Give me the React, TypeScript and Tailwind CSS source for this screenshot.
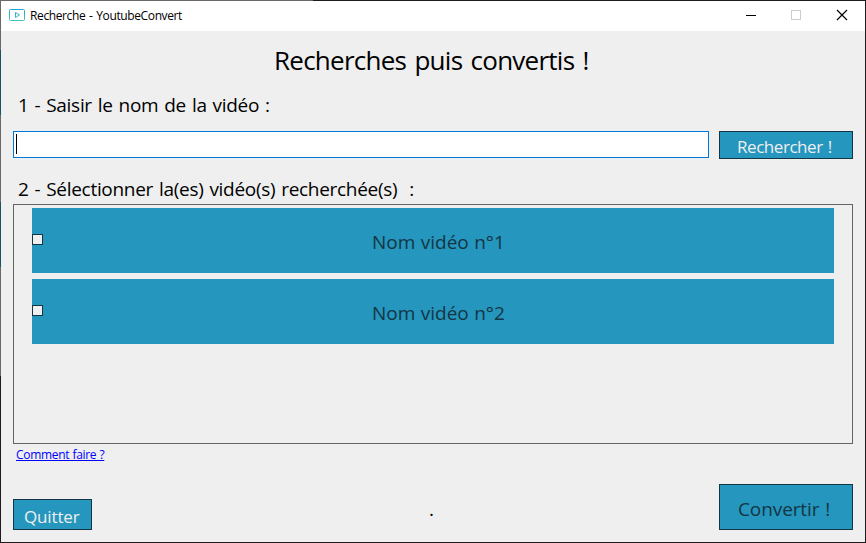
const videos = ["Nom vidéo n°1", "Nom vidéo n°2"];

function WindowEdge() {
  return (
    <div className="flex w-px shrink-0 flex-col">
      <div className="h-[49px] bg-[#6b686a]" />
      <div className="h-[65px] bg-[#204f63]" />
      <div className="h-[87px] bg-[#6b686a]" />
      <div className="h-[65px] bg-[#204f63]" />
      <div className="h-[109px] bg-[#6b686a]" />
      <div className="flex-1 bg-[#1f1b1d]" />
    </div>
  );
}

function TitleBar() {
  return (
    <header className="flex h-[30px] items-start bg-white">
      <svg className="mt-2 ml-2 shrink-0" width="16" height="12" viewBox="0 0 16 12" fill="none">
        <defs>
          <linearGradient id="logo" x1="0" y1="0" x2="0" y2="12" gradientUnits="userSpaceOnUse">
            <stop stopColor="#1ea5d5" />
            <stop offset="1" stopColor="#45c1bd" />
          </linearGradient>
        </defs>
        <rect x="0.5" y="0.5" width="15" height="11" rx="1" stroke="url(#logo)" />
        <path d="M6.5 3.5v5l4-2.5z" stroke="url(#logo)" />
      </svg>
      <span className="ml-[5px] text-[12px] leading-[30px] tracking-[-0.38px] [word-spacing:1px] whitespace-pre">Recherche - YoutubeConvert</span>
      <svg className="ml-auto shrink-0" width="140" height="30" viewBox="0 0 140 30" fill="none" shapeRendering="crispEdges">
        <path d="M21 14.5h10" stroke="#000" />
        <rect x="66.5" y="9.5" width="9" height="9" stroke="#ccc" />
        <path d="M112 9l10 10M122 9l-10 10" stroke="#000" strokeWidth="1.2" shapeRendering="auto" />
      </svg>
    </header>
  );
}

export default function App() {
  return (
    <div className="flex h-[543px] w-[866px] flex-col overflow-hidden bg-[#efefef] font-['Open_Sans','Noto_Sans',sans-serif] text-black">
      <div className="flex h-px shrink-0">
        <div className="w-[313px] bg-[#6b686a]" />
        <div className="flex-1 bg-[#1f1b1d]" />
      </div>
      <div className="flex h-[541px] shrink-0">
        <WindowEdge />
        <div className="flex w-[864px] flex-col">
          <TitleBar />
          <main className="flex flex-1 flex-col px-3">
            <h1 className="mt-[9px] h-[40px] pl-[261px] text-[26px] leading-[40px] tracking-[-0.75px] [word-spacing:2.3px] whitespace-pre">Recherches puis convertis !</h1>
            <label htmlFor="query" className="mt-[10px] h-[30px] pl-[5px] text-[19px] leading-[30px] tracking-[-0.3px] [word-spacing:1.3px] whitespace-pre">
              1 - Saisir le nom de la vidéo :
            </label>
            <div className="mt-[11px] flex h-7 items-start gap-[10px]">
              <div id="query" role="textbox" className="h-[27px] w-[696px] border border-[#0078d7] bg-white pt-[2px] pl-[2px]">
                <div className="h-5 w-px bg-black" />
              </div>
              <button className="h-7 w-[134px] border border-[#133544] bg-[#2596be] pl-[17px] text-left text-[17px] leading-[30px] tracking-[-0.45px] [word-spacing:1px] whitespace-pre text-[#efefef]">
                Rechercher !
              </button>
            </div>
            <h2 className="mt-[15px] h-[30px] pl-[5px] text-[19px] leading-[30px] tracking-[-0.3px] [word-spacing:1.3px] whitespace-pre">
              2 - Sélectionner la(es) vidéo(s) recherchée(s)  :
            </h2>
            <section className="flex h-[240px] w-[840px] flex-col gap-[6px] border border-[#646464] pt-[3px] pl-[18px]">
              {videos.map((name) => (
                <div key={name} className="flex h-[65px] w-[802px] items-start bg-[#2596be] text-[#133544]">
                  <span className="mt-[26px] h-[11px] w-[11px] border border-[#133544] bg-[#efefef]" />
                  <span className="mt-[18px] ml-[329px] text-[19px] leading-[32px] [word-spacing:0.5px] whitespace-pre">{name}</span>
                </div>
              ))}
            </section>
            <a className="mt-[1px] h-5 pl-[3px] text-[12px] leading-[20px] tracking-[-0.3px] [word-spacing:0.3px] whitespace-pre text-[#0000ff] underline">Comment faire ?</a>
            <footer className="mt-[19px] flex h-[46px] w-[840px] items-end">
              <button className="h-[31px] w-[79px] border border-[#133544] bg-[#2596be] pl-[10px] text-left text-[17px] leading-[34px] tracking-[-0.15px] whitespace-pre text-[#efefef]">
                Quitter
              </button>
              <span className="ml-[337px] h-[31px] text-[19px] leading-[20px]">.</span>
              <button className="ml-auto h-[46px] w-[134px] border border-[#133544] bg-[#2596be] pl-[18px] text-left text-[19px] leading-[48px] tracking-[-0.1px] [word-spacing:1px] whitespace-pre text-[#133544]">
                Convertir !
              </button>
            </footer>
          </main>
        </div>
        <div className="w-px bg-[#1f1b1d]" />
      </div>
      <div className="h-px shrink-0 bg-[#1f1b1d]" />
    </div>
  );
}
